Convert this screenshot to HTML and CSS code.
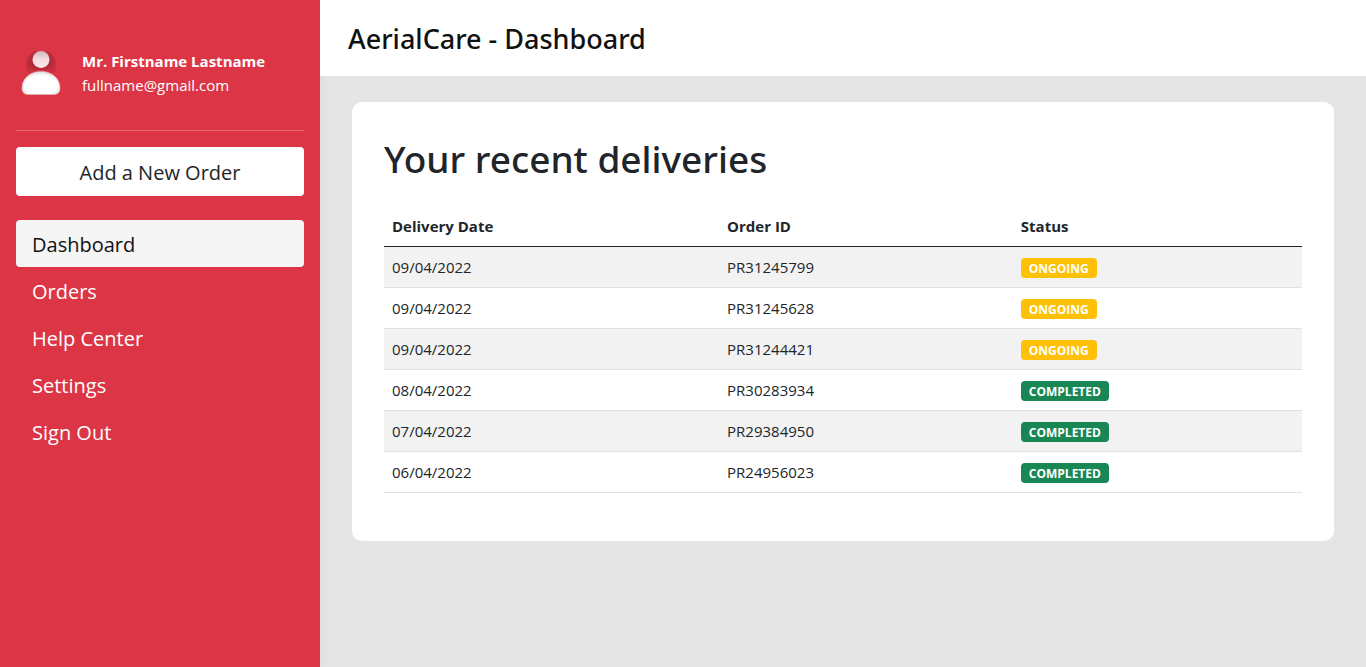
FILE: index.html
```html
<!DOCTYPE html>
<html lang="en">
<head>
<meta charset="utf-8">
<meta name="viewport" content="width=device-width, initial-scale=1">
<title>AerialCare - Dashboard</title>
<link rel="stylesheet" href="styles.css">
</head>
<body>
<div class="layout">
  <aside class="sidebar">
    <div class="profile">
      <svg class="avatar" viewBox="0 0 50 50" aria-hidden="true">
        <defs>
          <linearGradient id="head" x1="0" y1="0" x2="0" y2="1">
            <stop offset="0" stop-color="#d2b8ba"/>
            <stop offset="0.5" stop-color="#f5dcde"/>
            <stop offset="1" stop-color="#fde9ea"/>
          </linearGradient>
          <radialGradient id="halo" cx="0.5" cy="0.45" r="0.55">
            <stop offset="0" stop-color="#a02432"/>
            <stop offset="0.6" stop-color="#b32a39"/>
            <stop offset="1" stop-color="#c82f3f"/>
          </radialGradient>
          <radialGradient id="torso" cx="0.5" cy="0.6" r="0.6">
            <stop offset="0.7" stop-color="#ffffff"/>
            <stop offset="1" stop-color="#dcdada"/>
          </radialGradient>
        </defs>
        <path fill="url(#halo)" d="M19 3h12c6 3 9 8 9 14 0 4-1 7-3 8-4-3-8-3-12-3s-8 0-12 3c-2-1-3-4-3-8 0-6 3-11 9-14z"/>
        <circle cx="25" cy="11.500" r="8.500" fill="url(#head)"/>
        <path fill="url(#torso)" stroke="#d9c4c6" stroke-width="0.500" d="M25 23.500c11 0 19 7 19 16.500 0 4-2 6.500-6 6.500H12c-4 0-6-2.500-6-6.500 0-9.500 8-16.500 19-16.500z"/>
      </svg>
      <div class="identity">
        <strong class="name">Mr. Firstname Lastname</strong>
        <span class="email">fullname@gmail.com</span>
      </div>
    </div>
    <hr class="divider">
    <button class="new-order" type="button">Add a New Order</button>
    <nav class="menu">
      <a class="menu-link active" href="#dashboard" aria-current="page">Dashboard</a>
      <a class="menu-link" href="#orders">Orders</a>
      <a class="menu-link" href="#help">Help Center</a>
      <a class="menu-link" href="#settings">Settings</a>
      <a class="menu-link" href="#signout">Sign Out</a>
    </nav>
  </aside>
  <div class="page">
    <header class="topbar"><h1 class="page-title">AerialCare - Dashboard</h1></header>
    <main class="content">
      <section class="card">
        <h2 class="card-title">Your recent deliveries</h2>
        <table class="deliveries">
          <thead>
            <tr><th class="col-date" scope="col">Delivery Date</th><th class="col-id" scope="col">Order ID</th><th scope="col">Status</th></tr>
          </thead>
          <tbody>
            <tr><td>09/04/2022</td><td>PR31245799</td><td><span class="badge ongoing">ONGOING</span></td></tr>
            <tr><td>09/04/2022</td><td>PR31245628</td><td><span class="badge ongoing">ONGOING</span></td></tr>
            <tr><td>09/04/2022</td><td>PR31244421</td><td><span class="badge ongoing">ONGOING</span></td></tr>
            <tr><td>08/04/2022</td><td>PR30283934</td><td><span class="badge completed">COMPLETED</span></td></tr>
            <tr><td>07/04/2022</td><td>PR29384950</td><td><span class="badge completed">COMPLETED</span></td></tr>
            <tr><td>06/04/2022</td><td>PR24956023</td><td><span class="badge completed">COMPLETED</span></td></tr>
          </tbody>
        </table>
      </section>
    </main>
  </div>
</div>
</body>
</html>
```
FILE: styles.css
```css
* { box-sizing: border-box; }

body {
  margin: 0;
  font-family: "Segoe UI", "Open Sans", "Noto Sans", sans-serif;
  font-size: 15px;
  line-height: 24px;
  color: #212529;
  background: #e5e5e5;
}

.layout { display: flex; min-height: 100vh; }

.sidebar {
  flex: 0 0 320px;
  padding: 48px 16px 16px;
  background: #dc3545;
  color: #fff;
  box-shadow: 0 2px 10px rgba(0, 0, 0, 0.06);
}

.profile { display: flex; align-items: center; gap: 16px; }
.avatar { width: 50px; height: 50px; }
.identity { display: flex; flex-direction: column; }
.name { font-weight: 700; }

.divider {
  height: 1px;
  margin: 32px 0 16px;
  border: 0;
  background: rgba(255, 255, 255, 0.25);
}

.new-order {
  display: block;
  width: 100%;
  padding: 10px 16px 8px;
  border: 0;
  border-radius: 4px;
  background: #fff;
  color: #212529;
  font: inherit;
  font-size: 20px;
  line-height: 31px;
}

.menu { display: flex; flex-direction: column; margin-top: 24px; }

.menu-link {
  padding: 9px 16px 7px;
  border-radius: 4px;
  color: #fff;
  font-size: 20px;
  line-height: 31px;
  text-decoration: none;
}
.menu-link.active { background: #f5f5f5; color: #111; }

.page { flex: 1; min-width: 0; }

.topbar {
  position: relative;
  padding: 21px 28px 19px;
  background: #fff;
}
.page-title, .card-title { font-family: "Segoe UI Semibold", "Noto Sans", sans-serif; }
.page-title {
  margin: 0;
  font-size: 27px;
  font-weight: 500;
  line-height: 36px;
  color: #111;
}

.content { padding: 26px 32px; }

.card {
  padding: 33px 32px 48px;
  border-radius: 10px;
  background: #fff;
}
.card-title {
  margin: 0 0 23px;
  font-size: 37px;
  font-weight: 500;
  line-height: 48px;
}

.deliveries { width: 100%; border-collapse: collapse; table-layout: fixed; }
.deliveries th, .deliveries td {
  padding: 8px;
  text-align: left;
  border-bottom: 1px solid #dee2e6;
}
.deliveries th { border-bottom-color: #212529; }
.deliveries tbody tr:nth-child(odd) { background: #f2f2f2; }
.col-date { width: 36.5%; }
.col-id { width: 32%; }

.badge {
  display: inline-block;
  padding: 5px 8px 3px;
  border-radius: 4px;
  color: #fff;
  font-size: 12px;
  font-weight: 700;
  line-height: 12px;
}
.ongoing { background: #ffc107; }
.completed { background: #198754; }
```
